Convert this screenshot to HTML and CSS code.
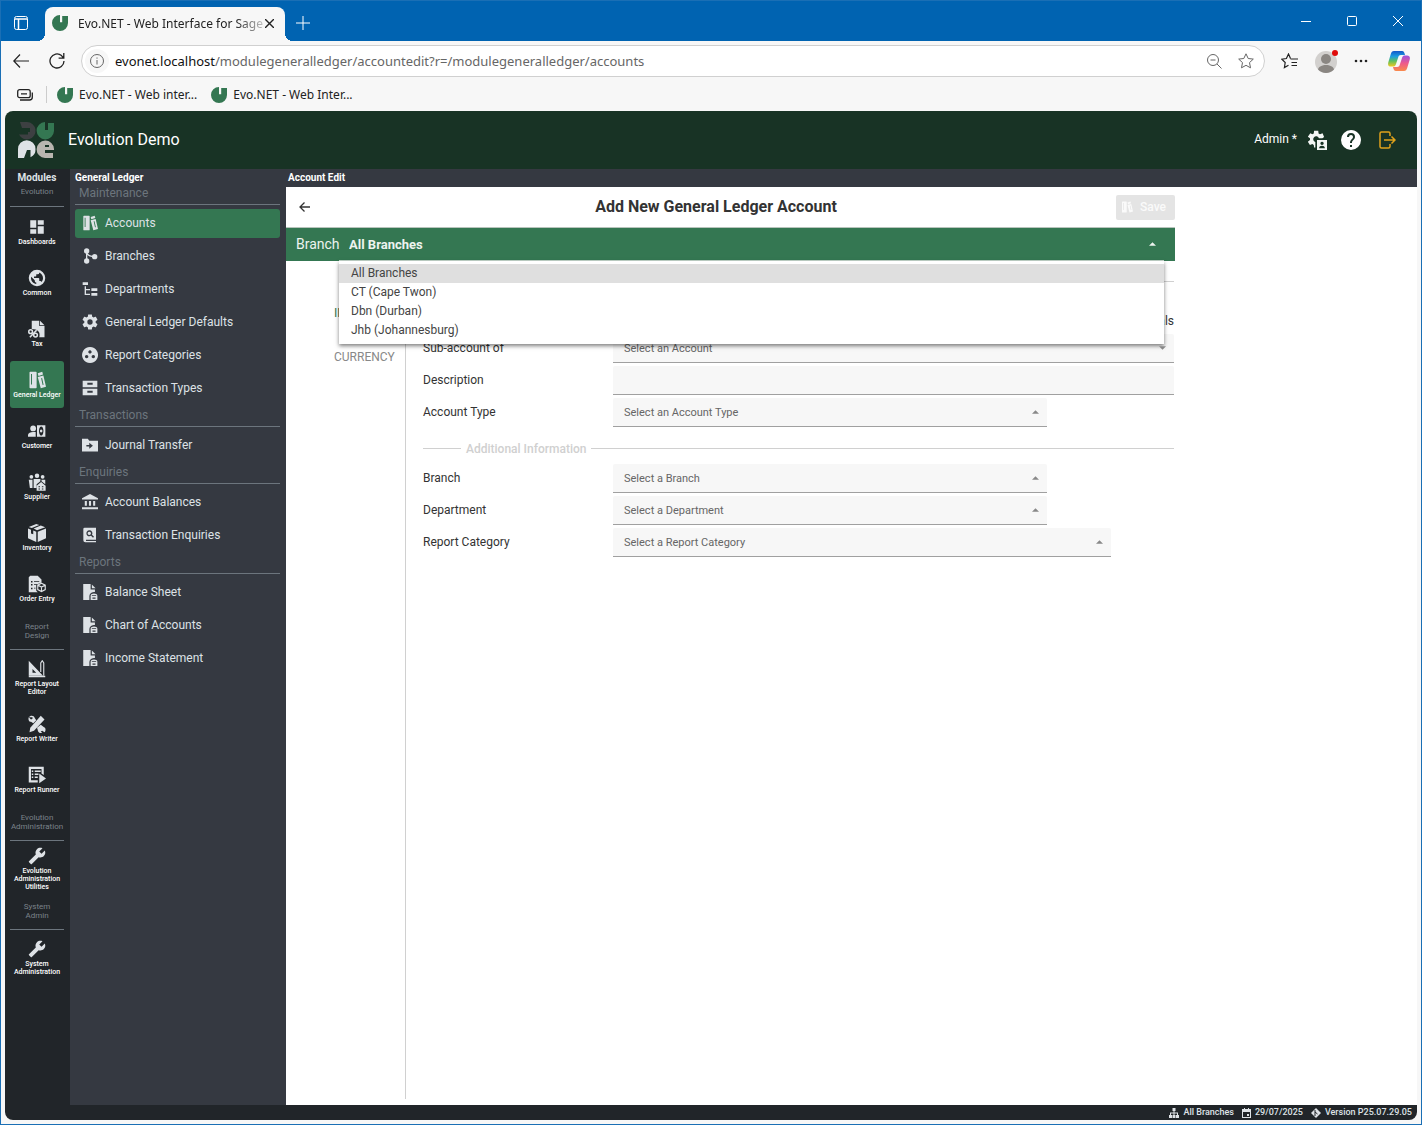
FILE: index.html
```html
<!DOCTYPE html>
<html lang="en">
<head>
<meta charset="utf-8">
<title>Evo.NET - Web Interface for Sage</title>
<link rel="stylesheet" href="styles.css">
</head>
<body>
<svg class="sprite" aria-hidden="true">
  <defs>
    <linearGradient id="cop-a" x1="0" y1="0" x2="0" y2="1"><stop offset="0" stop-color="#1257c9"/><stop offset=".35" stop-color="#1b9de0"/><stop offset=".65" stop-color="#5fc05f"/><stop offset="1" stop-color="#f2c81e"/></linearGradient>
    <linearGradient id="cop-b" x1="0" y1="0" x2="0" y2="1"><stop offset="0" stop-color="#9b52e0"/><stop offset=".5" stop-color="#ee5a8c"/><stop offset="1" stop-color="#f98a4b"/></linearGradient>
  </defs>
  <symbol id="i-evo" viewBox="0 0 16 16"><path fill="#347752" d="M8 0v7.200h2.200V1H16v7A8 8 0 1 1 8 0z"/></symbol>
  <symbol id="i-dash" viewBox="0 0 24 24"><path d="M13,3V9H21V3M13,21H21V11H13M3,21H11V15H3M3,13H11V3H3V13Z"/></symbol>
  <symbol id="i-globe" viewBox="0 0 24 24"><path d="M17.900,17.390C17.640,16.590 16.890,16 16,16H15V13A1,1 0 0,0 14,12H8V10H10A1,1 0 0,0 11,9V7H13A2,2 0 0,0 15,5V4.590C17.930,5.770 20,8.640 20,12C20,14.080 19.200,15.970 17.900,17.390M11,19.930C7.050,19.440 4,16.080 4,12C4,11.380 4.080,10.780 4.210,10.210L9,15V16A2,2 0 0,0 11,18M12,1A11,11 0 0,0 1,12A11,11 0 0,0 12,23A11,11 0 0,0 23,12A11,11 0 0,0 12,1Z"/></symbol>
  <symbol id="i-tax" viewBox="0 0 24 24"><path d="M5 1h10v7h7v15h-7c2-7-2-11-10-11zM16 1l6 6h-6z"/><g fill="none" stroke="currentColor" stroke-width="2"><circle cx="3.500" cy="15.500" r="2.500"/><circle cx="10" cy="20" r="2.500"/><path d="M11.500 13.500L2.500 23"/></g></symbol>
  <symbol id="i-books" viewBox="0 0 24 24"><path fill-rule="evenodd" d="M3 1h7.500a1 1 0 0 1 1 1v20a1 1 0 0 1-1 1H3a1 1 0 0 1-1-1V2a1 1 0 0 1 1-1zM4 4v14h1.300V4z"/><path fill-rule="evenodd" d="M13 3l6-2 1 3.500-6 2zM13 8l7.500-2L24 21l-7 2zM17.500 9.500l2 9 1.300-.3-2-9z"/></symbol>
  <symbol id="i-customer" viewBox="0 0 28 24"><circle cx="8" cy="8" r="4.500"/><path d="M0 21v-3c0-3 4-4.500 8-4.500h4V21z"/><path fill-rule="evenodd" d="M14 3h13v18H14zM20.500 5a3.500 7 0 1 0 .1 0zM20.500 9.500a2 2.500 0 1 1-.1 0z"/></symbol>
  <symbol id="i-supplier" viewBox="0 0 24 24"><circle cx="4.500" cy="5" r="2.500"/><circle cx="12" cy="3.500" r="3"/><circle cx="19.500" cy="5" r="2.500"/><path d="M1 9h5v11H2.500zM7.500 8h9v3l-5 4v5h-4zM18 9h5v6l-5-4z"/><path fill-rule="evenodd" d="M17.500 12l6 5v6.500h-12V17zM14 17.500V19h2v-1.500zM18.500 17.500V19h2v-1.500zM14 20.500V22h2v-1.500zM18.500 20.500V22h2v-1.500z"/></symbol>
  <symbol id="i-box" viewBox="0 0 24 24"><path d="M11 0l4 1.200-10 4L1 4zM17 2l6 2.200-11 4L7.500 6zM0 6l4 1.500v5l3 1V8.700l4 1.500V24L0 19zM13 10.200L24 6v13l-11 5z"/></symbol>
  <symbol id="i-order" viewBox="0 0 24 24"><path fill-rule="evenodd" d="M3 1h10l5 5v4l-7 3v8l2 2H1V3zM4 8v2h2V8zM8 8v1h7V8zM4 12v2h2v-2zM8 12v1h4v-1zM4 17v2h2v-2zM8 17v1h2v-1z"/><path fill="none" stroke="currentColor" stroke-width="1.500" d="M18 11l5 2.500v6L18 22l-5-2.500v-6zM13 13.500l5 2.500 5-2.500M18 16v6"/></symbol>
  <symbol id="i-ruler" viewBox="0 0 24 24"><path fill-rule="evenodd" d="M1 1l19 20H1zM6 12v5h5z"/><path fill="none" stroke="currentColor" stroke-width="1.500" d="M17 16V4l2-3 2 3v17"/><path d="M1 23h22v-2H1z"/></symbol>
  <symbol id="i-design" viewBox="0 0 24 24"><path d="M17 1l5 5L8 21l-6 2 1-6z"/><path d="M1 3c2-3 7-3 8 1l2 3-4 4-3-2C1 9 0 6 1 3l3 3 2-1 0-2zM17 13l4 3c3 1 3 5 1 7l-3-2-2 1 2 2c-3 1-6-1-6-4l-1-3z"/></symbol>
  <symbol id="i-runner" viewBox="0 0 24 24"><path fill-rule="evenodd" d="M1 1h20v11l-3-2V4H4v15h9v3H1z"/><path d="M5 6h2v2H5zM9 6h8v2H9zM5 10h2v2H5zM9 10h5v2H9zM5 14h2v2H5zM9 14h4v2H9z"/><path d="M15 10l9 6.500L15 23z"/></symbol>
  <symbol id="i-wrench" viewBox="0 0 24 24"><path transform="matrix(-1 0 0 1 24 0)" d="M22.700,19L13.600,9.900C14.500,7.600 14,4.900 12.100,3C10.100,1 7.100,0.600 4.700,1.700L9,6L6,9L1.600,4.700C0.400,7.100 0.900,10.100 2.900,12.100C4.800,14 7.500,14.500 9.800,13.600L18.900,22.700C19.300,23.100 19.900,23.100 20.300,22.700L22.600,20.400C23.100,20 23.100,19.300 22.700,19Z"/></symbol>
  <symbol id="i-branch" viewBox="0 0 24 24"><circle cx="7" cy="4.500" r="4"/><circle cx="7" cy="19.500" r="4"/><circle cx="19" cy="13" r="4"/><path fill="none" stroke="currentColor" stroke-width="2" d="M7 5v15M7 7c2 5 6 6 12 6"/></symbol>
  <symbol id="i-tree" viewBox="0 0 24 24"><path d="M1 2h8v4H1zM14 11h9v4h-9zM14 18h9v4h-9zM4 8h2v4h6v2H6v5h6v2H4z"/></symbol>
  <symbol id="i-cog" viewBox="1.500 1.500 21 21"><path d="M12,15.500A3.500,3.500 0 0,1 8.500,12A3.500,3.500 0 0,1 12,8.500A3.500,3.500 0 0,1 15.500,12A3.500,3.500 0 0,1 12,15.500M19.430,12.970C19.470,12.650 19.500,12.330 19.500,12C19.500,11.670 19.470,11.340 19.430,11L21.540,9.370C21.730,9.220 21.780,8.950 21.660,8.730L19.660,5.270C19.540,5.050 19.270,4.960 19.050,5.050L16.560,6.050C16.040,5.660 15.500,5.320 14.870,5.070L14.500,2.420C14.460,2.180 14.250,2 14,2H10C9.750,2 9.540,2.180 9.500,2.420L9.130,5.070C8.500,5.320 7.960,5.660 7.440,6.050L4.950,5.050C4.730,4.960 4.460,5.050 4.340,5.270L2.340,8.730C2.210,8.950 2.270,9.220 2.460,9.370L4.570,11C4.530,11.340 4.500,11.670 4.500,12C4.500,12.330 4.530,12.650 4.570,12.970L2.460,14.630C2.270,14.780 2.210,15.050 2.340,15.270L4.340,18.730C4.460,18.950 4.730,19.030 4.950,18.950L7.440,17.940C7.960,18.340 8.500,18.680 9.130,18.930L9.500,21.580C9.540,21.820 9.750,22 10,22H14C14.250,22 14.460,21.820 14.500,21.580L14.870,18.930C15.500,18.670 16.040,18.340 16.560,17.940L19.050,18.950C19.270,19.030 19.540,18.950 19.660,18.730L21.660,15.270C21.780,15.050 21.730,14.780 21.540,14.630L19.430,12.970Z"/></symbol>
  <symbol id="i-dots" viewBox="0 0 24 24"><path fill-rule="evenodd" d="M12 0a12 12 0 1 0 .1 0zM12 5a2.500 2.500 0 1 1-.1 0zM7 12a2.500 2.500 0 1 1-.1 0zM17 12a2.500 2.500 0 1 1-.1 0z"/></symbol>
  <symbol id="i-drawers" viewBox="0 0 24 24"><path fill-rule="evenodd" d="M1 1h22v10H1zM8 4v3h8V4zM1 13h22v10H1zM8 16v3h8v-3z"/></symbol>
  <symbol id="i-folder" viewBox="1 2 22 20"><path d="M11,17V14H7V12H11V9L16,13M22,6H11L9,3.500H1V21H23V6Z"/></symbol>
  <symbol id="i-bank" viewBox="0 0 23 23"><path d="M11.500,0L0,6V8H23V6M16,10V17H19V10M0,22H23V19H0M10,10V17H13V10M4,10V17H7V10H4Z"/></symbol>
  <symbol id="i-enquiry" viewBox="0 0 24 24"><path fill-rule="evenodd" d="M4 1h17v18H6v2h15v2H5a3 3 0 0 1-3-3V3a2 2 0 0 1 2-2zM11 5a4.500 4.500 0 1 0 2.500 8.300l3 3 1.500-1.500-3-3A4.500 4.500 0 0 0 11 5zM11 7a2.500 2.500 0 1 1-.1 0z"/></symbol>
  <symbol id="i-report" viewBox="0 0 24 26"><path fill-rule="evenodd" d="M1 0h12v9h7v4c-6-1-9 3-9 7v6H1z"/><path d="M15 1l6 6h-6z"/><path fill-rule="evenodd" d="M13 19c0-5 11-5 11 0v7H13zM15 19h7v-1h-7zM16 22v2h5v-2z"/></symbol>
  <symbol id="i-caret" viewBox="0 0 8 4"><path d="M0 4l4-4 4 4z"/></symbol>
</svg>

<div class="window">
  <header class="titlebar">
    <button class="icon-btn tab-actions" aria-label="Tab actions"><svg width="14" height="14" viewBox="0 0 14 14" fill="none" stroke="#fff"><rect x=".5" y=".5" width="13" height="13" rx="2"/><path d="M1 3h12M4.500 3v10" stroke-width="1.500"/></svg></button>
    <div class="tab">
      <svg class="fav"><use href="#i-evo"/></svg>
      <span class="tab-title">Evo.NET - Web Interface for Sage</span>
      <button class="icon-btn" aria-label="Close tab"><svg width="9" height="9" viewBox="0 0 9 9" stroke="#222" stroke-width="1.400"><path d="M0 0l9 9M9 0L0 9"/></svg></button>
    </div>
    <button class="icon-btn new-tab" aria-label="New tab"><svg width="14" height="14" viewBox="0 0 14 14" stroke="#fff"><path d="M7 0v14M0 7h14"/></svg></button>
    <div class="window-controls">
      <button class="icon-btn" aria-label="Minimise"><svg width="10" height="10" viewBox="0 0 10 10" stroke="#fff"><path d="M0 5.500h10"/></svg></button>
      <button class="icon-btn" aria-label="Maximise"><svg width="10" height="10" viewBox="0 0 10 10" fill="none" stroke="#fff"><rect x=".5" y=".5" width="9" height="9" rx="1"/></svg></button>
      <button class="icon-btn" aria-label="Close"><svg width="10" height="10" viewBox="0 0 10 10" stroke="#fff"><path d="M0 0l10 10M10 0L0 10"/></svg></button>
    </div>
  </header>

  <div class="toolbar">
    <button class="icon-btn nav-back" aria-label="Back"><svg width="16" height="14" viewBox="0 0 16 14" fill="none" stroke="#222" stroke-width="1.200"><path d="M16 7H1M7 .5L.8 7 7 13.500"/></svg></button>
    <button class="icon-btn" aria-label="Refresh"><svg width="16" height="16" viewBox="0 0 16 16" fill="none" stroke="#222" stroke-width="1.300"><path d="M15 8a7 7 0 1 1-2.500-5.400L14.500 5M14.800 0v5.200H9.600"/></svg></button>
    <div class="address">
      <span class="site-info"><svg width="14" height="14" viewBox="0 0 14 14" fill="none" stroke="#666"><circle cx="7" cy="7" r="6.500"/><path d="M7 6v4.500M7 3.500v1.200"/></svg></span>
      <span class="url"><b>evonet.localhost</b>/modulegeneralledger/accountedit?r=/modulegeneralledger/accounts</span>
      <button class="icon-btn" aria-label="Zoom out"><svg width="15" height="15" viewBox="0 0 15 15" fill="none" stroke="#666"><circle cx="6" cy="6" r="5.500"/><path d="M3.500 6h5M10 10l4.500 4.500"/></svg></button>
      <button class="icon-btn" aria-label="Add to favourites"><svg width="16" height="16" viewBox="0 0 16 16" fill="none" stroke="#666"><path d="M8 .8l2.200 4.700 5.100.6-3.800 3.500 1 5.200L8 12.300l-4.500 2.500 1-5.200L.7 6.100l5.100-.6z"/></svg></button>
    </div>
    <button class="icon-btn" aria-label="Favourites"><svg width="17" height="16" viewBox="0 0 17 16" fill="none" stroke="#222" stroke-width="1.200"><path d="M9.500 5.500L7.500 1 5.400 5.500.8 6.200 4.200 9.500l-.8 5 4.100-2.300M9.500 6H17M10.500 9.500H16M10.500 12.500H16"/></svg></button>
    <button class="icon-btn" aria-label="Profile"><svg width="24" height="24" viewBox="0 0 24 24"><circle cx="12" cy="13" r="11" fill="#d2d0ce"/><circle cx="12" cy="10" r="5" fill="#8a8682"/><path fill="#8a8682" d="M4 20.500c1-6 15-6 16 0a11 11 0 0 1-16 0z"/><circle cx="21" cy="4" r="3" fill="#e00b0b"/></svg></button>
    <button class="icon-btn more" aria-label="Settings and more"><svg width="14" height="4" viewBox="0 0 14 4"><circle cx="2" cy="2" r="1.300"/><circle cx="7" cy="2" r="1.300"/><circle cx="12" cy="2" r="1.300"/></svg></button>
    <button class="icon-btn" aria-label="Copilot"><svg width="22" height="20" viewBox="0 0 22 20"><path fill="url(#cop-a)" d="M6 0h8c2 0 2.500 2 3 4h-4c-2 0-2.500 1-3 3l-2 6c-.6 2-1.500 2.500-3 2.500H3c-2.500 0-3.500-1.500-2.600-4.500l2.400-8C3.400 1.200 4.200 0 6 0z"/><path fill="url(#cop-b)" d="M16 20H8c-2 0-2.500-2-3-4h4c2 0 2.500-1 3-3l2-6c.6-2 1.500-2.500 3-2.500h2c2.500 0 3.500 1.500 2.600 4.500l-2.400 8c-.6 1.800-1.400 3-3.200 3z"/></svg></button>
  </div>

  <nav class="bookmarks" aria-label="Favourites bar">
    <button class="icon-btn" aria-label="Workspaces"><svg width="16" height="12" viewBox="0 0 16 12" fill="none" stroke="#222" stroke-width="1.300"><rect x=".7" y=".7" width="12.500" height="8" rx="2"/><path d="M3 11h9.500c1.800 0 2.800-1 2.800-2.800V3.500M4 4.800h6"/></svg></button>
    <a href="#"><svg class="fav"><use href="#i-evo"/></svg>Evo.NET - Web inter...</a>
    <a href="#"><svg class="fav"><use href="#i-evo"/></svg>Evo.NET - Web Inter...</a>
  </nav>

  <div class="app">
    <header class="app-header">
      <svg class="logo" viewBox="0 0 36 36">
        <path fill="#3d4042" d="M2 0h7a8.700 8.700 0 1 1-8 12.500h9V10H12V6H4z"/>
        <path fill="#347752" d="M27 0v8h3V1h6v8A8.700 8.700 0 1 1 27 0z"/>
        <path fill="#dee2e6" d="M0 36V27a8.700 8.700 0 0 1 17.500 0 8.700 8.700 0 0 1-5 8.300V28H9l-3 8z"/>
        <path fill="#b9b6b0" d="M35 36h-8A8.700 8.700 0 1 1 36 27v1h-9v3h8zM27 23v2h4v-2z"/>
      </svg>
      <span class="company">Evolution Demo</span>
      <span class="user">Admin *</span>
      <button class="icon-btn" aria-label="User settings"><svg width="20" height="20" viewBox="0 0 24 24" fill="#f4f6f5"><path d="M19.430 11L21.540 9.370 19.660 5 16.560 6.050 14.870 5.070 14.500 2H9.500L9.130 5.070 7.440 6.050 4.950 5 2 9l2.570 2v2L2 15l2.500 4 2.940-1.060L9.130 18.930 9.500 22H11v-6.600A3.500 3.500 0 1 1 15.300 11z" transform="translate(-1 -1)"/><path fill-rule="evenodd" d="M12 12h12v12H12zM18 14a2 2 0 1 0 .1 0zM14.500 22h7c0-4-7-4-7 0z"/></svg></button>
      <button class="icon-btn" aria-label="Help"><svg width="20" height="20" viewBox="2 2 20 20" fill="#fff"><path d="M15.070,11.250L14.170,12.170C13.450,12.890 13,13.500 13,15H11V14.500C11,13.390 11.450,12.390 12.170,11.670L13.410,10.410C13.780,10.050 14,9.550 14,9C14,7.890 13.100,7 12,7A2,2 0 0,0 10,9H8A4,4 0 0,1 12,5A4,4 0 0,1 16,9C16,9.880 15.640,10.670 15.070,11.250M13,19H11V17H13M12,2A10,10 0 0,0 2,12A10,10 0 0,0 12,22A10,10 0 0,0 22,12C22,6.470 17.500,2 12,2Z"/></svg></button>
      <button class="icon-btn" aria-label="Sign out"><svg width="17" height="18" viewBox="0 0 17 18" fill="none" stroke="#e0a21b" stroke-width="1.500"><path d="M11 5V2.500C11 1.500 10.500 1 9.500 1h-7C1.500 1 1 1.500 1 2.500v13c0 1 .5 1.500 1.500 1.500h7c1 0 1.500-.5 1.500-1.500V13M5 9h10.500M12.500 5.500L16 9l-3.500 3.500"/></svg></button>
    </header>

    <div class="app-body">
      <nav class="modules" aria-label="Modules">
        <h2>Modules</h2>
        <h3 class="first">Evolution</h3>
        <a href="#"><svg><use href="#i-dash"/></svg>Dashboards</a>
        <a href="#"><svg><use href="#i-globe"/></svg>Common</a>
        <a href="#"><svg><use href="#i-tax"/></svg>Tax</a>
        <a href="#" class="active"><svg><use href="#i-books"/></svg>General Ledger</a>
        <a href="#"><svg><use href="#i-customer"/></svg>Customer</a>
        <a href="#"><svg><use href="#i-supplier"/></svg>Supplier</a>
        <a href="#"><svg><use href="#i-box"/></svg>Inventory</a>
        <a href="#"><svg><use href="#i-order"/></svg>Order Entry</a>
        <h3>Report<br>Design</h3>
        <a href="#"><svg><use href="#i-ruler"/></svg>Report Layout<br>Editor</a>
        <a href="#"><svg><use href="#i-design"/></svg>Report Writer</a>
        <a href="#"><svg><use href="#i-runner"/></svg>Report Runner</a>
        <h3>Evolution<br>Administration</h3>
        <a href="#"><svg><use href="#i-wrench"/></svg>Evolution<br>Administration<br>Utilities</a>
        <h3>System<br>Admin</h3>
        <a href="#"><svg><use href="#i-wrench"/></svg>System<br>Administration</a>
      </nav>

      <nav class="menu" aria-label="General Ledger">
        <h2>General Ledger</h2>
        <h3>Maintenance</h3>
        <a href="#" class="active"><svg><use href="#i-books"/></svg>Accounts</a>
        <a href="#"><svg><use href="#i-branch"/></svg>Branches</a>
        <a href="#"><svg><use href="#i-tree"/></svg>Departments</a>
        <a href="#"><svg><use href="#i-cog"/></svg>General Ledger Defaults</a>
        <a href="#"><svg><use href="#i-dots"/></svg>Report Categories</a>
        <a href="#"><svg><use href="#i-drawers"/></svg>Transaction Types</a>
        <h3>Transactions</h3>
        <a href="#"><svg><use href="#i-folder"/></svg>Journal Transfer</a>
        <h3>Enquiries</h3>
        <a href="#"><svg><use href="#i-bank"/></svg>Account Balances</a>
        <a href="#"><svg><use href="#i-enquiry"/></svg>Transaction Enquiries</a>
        <h3>Reports</h3>
        <a href="#"><svg><use href="#i-report"/></svg>Balance Sheet</a>
        <a href="#"><svg><use href="#i-report"/></svg>Chart of Accounts</a>
        <a href="#"><svg><use href="#i-report"/></svg>Income Statement</a>
      </nav>

      <main class="content">
        <h2 class="crumb">Account Edit</h2>
        <div class="panel">
          <div class="panel-head">
            <button class="icon-btn back" aria-label="Back"><svg width="11" height="10" viewBox="0 0 11 10" fill="none" stroke="#333" stroke-width="1.300"><path d="M11 5H1M5.500.5L1 5l4.500 4.500"/></svg></button>
            <h1>Add New General Ledger Account</h1>
            <button class="save" disabled><svg><use href="#i-books"/></svg>Save</button>
          </div>
          <div class="branch-bar">
            <label for="branch-filter">Branch</label>
            <div class="branch-select">
              <select id="branch-filter"><option>All Branches</option><option>CT (Cape Twon)</option><option>Dbn (Durban)</option><option>Jhb (Johannesburg)</option></select>
              <svg class="caret"><use href="#i-caret"/></svg>
              <ul class="options" role="listbox" aria-label="Branch">
                <li role="option" aria-selected="true">All Branches</li>
                <li role="option">CT (Cape Twon)</li>
                <li role="option">Dbn (Durban)</li>
                <li role="option">Jhb (Johannesburg)</li>
              </ul>
            </div>
          </div>
          <div class="panel-body">
            <nav class="tabs" aria-label="Sections">
              <a href="#" class="active">INFO</a>
              <a href="#">CURRENCY</a>
            </nav>
            <form class="form">
              <div class="divider first"><span>General</span></div>
              <div class="totals">Totals</div>
              <div class="row"><label for="sub">Sub-account of</label><div class="field"><select id="sub"><option>Select an Account</option></select><svg class="caret down"><use href="#i-caret"/></svg></div></div>
              <div class="row"><label for="desc">Description</label><div class="field"><input id="desc" type="text"></div></div>
              <div class="row"><label for="type">Account Type</label><div class="field short"><select id="type"><option>Select an Account Type</option></select><svg class="caret"><use href="#i-caret"/></svg></div></div>
              <div class="divider"><span>Additional Information</span></div>
              <div class="row"><label for="branch">Branch</label><div class="field short"><select id="branch"><option>Select a Branch</option></select><svg class="caret"><use href="#i-caret"/></svg></div></div>
              <div class="row"><label for="dept">Department</label><div class="field short"><select id="dept"><option>Select a Department</option></select><svg class="caret"><use href="#i-caret"/></svg></div></div>
              <div class="row"><label for="cat">Report Category</label><div class="field medium"><select id="cat"><option>Select a Report Category</option></select><svg class="caret"><use href="#i-caret"/></svg></div></div>
            </form>
          </div>
        </div>
      </main>
    </div>

    <footer class="status">
      <span><svg width="10" height="10" viewBox="0 0 10 10"><path d="M3.500 0h3v3h-1v1.500H9V7h1v3H7V7h1V5.500H5.500V7h1v3h-3V7h1V5.500H2V7h1v3H0V7h1V4.500h3.500V3h-1z"/></svg>All Branches</span>
      <span><svg width="9" height="10" viewBox="0 0 9 10"><path fill-rule="evenodd" d="M0 1h2V0h1v1h3V0h1v1h2v9H0zM1 4v5h7V4zM5 6h2v2H5z"/></svg>29/07/2025</span>
      <span><svg width="10" height="10" viewBox="0 0 10 10"><path d="M5 0l5 5-5 5-5-5z"/><path fill="none" stroke="#212529" d="M4 2v6M4 4l2.500 2"/></svg>Version P25.07.29.05</span>
    </footer>
  </div>
</div>
</body>
</html>
```

FILE: styles.css
```css
* { box-sizing: border-box; }

:root {
  --green: #347752;
  --dark: #212529;
  --slate: #353941;
  --chrome: #f7f7f7;
  --light: #dee2e6;
}

body {
  margin: 0;
  font-family: Roboto, "Liberation Sans", sans-serif;
  font-size: 12px;
  color: #333;
}

h1, h2, h3, ul { margin: 0; padding: 0; }
a { color: inherit; text-decoration: none; }
button, input, select { font: inherit; color: inherit; }
svg { flex: none; }
svg:not([fill]) { fill: currentColor; }
.sprite { position: absolute; width: 0; height: 0; }

.icon-btn {
  display: flex;
  align-items: center;
  justify-content: center;
  padding: 0;
  border: 0;
  background: none;
}

.window {
  display: flex;
  flex-direction: column;
  min-height: 100vh;
  border: 1px solid #1a6fb5;
  background: var(--chrome);
}

/* Browser chrome */
.titlebar, .toolbar, .bookmarks {
  display: flex;
  align-items: center;
  font-family: "Noto Sans", "Open Sans", sans-serif;
  font-size: 12px;
  color: #222;
}
.titlebar { height: 40px; background: #0063b1; }
.tab-actions { width: 40px; padding-top: 4px; }
.tab {
  position: relative;
  align-self: flex-end;
  display: flex;
  align-items: center;
  width: 240px;
  height: 34px;
  margin-left: 4px;
  padding: 0 11px 2px 7px;
  border-radius: 8px 8px 0 0;
  background: var(--chrome);
}
.tab::before, .tab::after {
  content: "";
  position: absolute;
  bottom: 0;
  width: 8px;
  height: 8px;
}
.tab::before { right: 100%; background: radial-gradient(circle at 0 0, transparent 8px, var(--chrome) 8px); }
.tab::after { left: 100%; background: radial-gradient(circle at 100% 0, transparent 8px, var(--chrome) 8px); }
.tab-title {
  flex: 1;
  margin: 0 0 0 10px;
  white-space: nowrap;
  -webkit-mask-image: linear-gradient(to right, #000 84%, rgba(0, 0, 0, .2));
  mask-image: linear-gradient(to right, #000 84%, rgba(0, 0, 0, .2));
}
.fav { width: 16px; height: 16px; }
.new-tab { width: 36px; padding-top: 4px; }
.window-controls { display: flex; margin-left: auto; }
.window-controls .icon-btn { width: 46px; height: 40px; }

.toolbar { height: 40px; padding: 0 11px 0 12px; gap: 16px; }
.nav-back, .more { margin-right: 4px; }
.address {
  flex: 1;
  display: flex;
  align-items: center;
  height: 32px;
  padding: 0 10px 0 3px;
  gap: 16px;
  border: 1px solid #d0d0d0;
  border-radius: 16px;
  background: #fff;
}
.site-info {
  display: flex;
  align-items: center;
  justify-content: center;
  width: 24px;
  height: 24px;
  border-radius: 12px;
  background: var(--chrome);
}
.url { flex: 1; margin-left: -10px; font-size: 13px; color: #666; }
.url b { font-weight: 400; color: #111; }

.bookmarks { height: 30px; padding: 0 16px 3px; gap: 16px; }
.bookmarks a { display: flex; align-items: center; gap: 6px; }
.bookmarks a:first-of-type { padding-left: 10px; margin: 0 -2px 0 -3px; border-left: 1px solid #ccc; }

/* Application frame */
.app {
  flex: 1;
  display: flex;
  flex-direction: column;
  margin: 0 4px 4px;
  border-radius: 8px;
  overflow: hidden;
  background: #fff;
}
.app-header {
  display: flex;
  align-items: center;
  height: 58px;
  padding: 0 21px 0 13px;
  gap: 14px;
  background: #183325;
  color: #fff;
}
.logo { width: 36px; height: 36px; }
.company { flex: 1; padding-bottom: 2px; font-size: 16px; }
.user { margin-right: -4px; padding-bottom: 2px; }
.app-header .icon-btn:last-child { margin-left: 4px; }

.app-body { flex: 1; display: flex; }
h2 { font-size: 10px; font-weight: 700; line-height: 18px; color: #fff; }

.modules {
  display: flex;
  flex-direction: column;
  gap: 4px;
  width: 65px;
  padding: 0 6px 0 5px;
  background: var(--dark);
  color: var(--light);
  text-align: center;
}
.modules h2 { margin-bottom: -4px; color: var(--light); }
.modules h3 {
  display: flex;
  flex-direction: column;
  align-items: center;
  padding: 6px 0 9px;
  border-bottom: 1px solid #6c757d;
  font-size: 8px;
  font-weight: 400;
  line-height: 9px;
  color: #7b838a;
  white-space: nowrap;
}
.modules h3.first { margin-bottom: -3px; padding: 0 0 10px; }
.modules a {
  display: flex;
  flex-direction: column;
  align-items: center;
  justify-content: center;
  min-height: 47px;
  border-radius: 3px;
  font-size: 7px;
  font-weight: 500;
  line-height: 8px;
  color: #fff;
  white-space: nowrap;
}
.modules svg { width: 18px; height: 18px; margin-bottom: 2px; color: var(--light); }
.modules .active, .menu .active { background: var(--green); }

.menu {
  display: flex;
  flex-direction: column;
  gap: 4px;
  width: 216px;
  padding: 0 6px 0 5px;
  background: var(--slate);
  color: var(--light);
}
.menu h2 { margin-bottom: -6px; }
.menu h3 {
  height: 20px;
  padding-left: 4px;
  font-size: 12px;
  font-weight: 400;
  line-height: 16px;
  color: #6c757d;
  border-bottom: 1px solid #6c757d;
}
.menu a {
  display: flex;
  align-items: center;
  height: 29px;
  padding: 0 0 2px 7px;
  gap: 7px;
  border-radius: 3px;
}
.menu svg { width: 16px; height: 16px; }

/* Editor panel */
.content { flex: 1; display: flex; flex-direction: column; min-width: 0; }
.crumb { padding-left: 2px; background: var(--slate); }
.panel { flex: 1; display: flex; flex-direction: column; max-width: 889px; }
.panel-head {
  display: flex;
  align-items: center;
  justify-content: space-between;
  height: 41px;
  border-bottom: 1px solid #b8c4bc;
}
.panel-head h1 { padding-bottom: 2px; font-size: 16px; font-weight: 700; }
.back { width: 36px; height: 36px; margin-right: -6px; }
.save {
  display: flex;
  align-items: center;
  width: 59px;
  height: 25px;
  padding: 0 5px;
  gap: 7px;
  border: 0;
  border-radius: 2px;
  background: #e4e4e4;
  color: #fafafa;
  font-weight: 500;
}
.save svg { width: 12px; height: 12px; }

.branch-bar {
  display: flex;
  height: 33px;
  padding: 0 11px 0 10px;
  background: var(--green);
  color: #edf3ef;
}
.branch-bar label { width: 43px; font-size: 14px; line-height: 33px; }
.branch-select, .field { display: grid; align-items: center; }
.branch-select { position: relative; flex: 1; border-bottom: 1px solid #c4d6cb; }
.branch-select select, .field select, .field input {
  grid-area: 1 / 1;
  width: 100%;
  height: 100%;
  padding: 0 11px;
  border: 0;
  outline: 0;
  background: none;
  appearance: none;
}
.branch-select select { padding: 0 10px; font-size: 13px; font-weight: 700; }
.caret {
  grid-area: 1 / 1;
  justify-self: end;
  width: 7px;
  height: 4px;
  margin-right: 8px;
  pointer-events: none;
}
.caret.down { transform: rotate(180deg); }
.options {
  position: absolute;
  top: 100%;
  left: 0;
  right: 0;
  margin-top: 1px;
  padding: 3px 0 4px;
  background: #fff;
  box-shadow: 0 2px 4px rgba(0, 0, 0, .5);
  color: #444;
  list-style: none;
}
.options li { padding-left: 12px; line-height: 19px; }
.options li[aria-selected="true"] { background: #dfdfdf; }

.panel-body { flex: 1; display: flex; padding-bottom: 6px; }
.tabs {
  display: flex;
  flex-direction: column;
  gap: 24px;
  width: 120px;
  padding: 42px 0 0 48px;
  border-right: 1px solid #d0d0d0;
  line-height: 20px;
  color: #888;
}
.tabs .active { color: var(--green); }

.form {
  flex: 1;
  display: flex;
  flex-direction: column;
  gap: 3px;
  padding: 0 1px 0 17px;
}
.row { display: grid; grid-template-columns: 190px 1fr; align-items: center; height: 29px; }
.row label { padding-bottom: 2px; }
.field {
  height: 29px;
  border-bottom: 1px solid #a0a0a0;
  border-radius: 2px 2px 0 0;
  background: #f7f7f7;
  font-size: 11px;
  color: #666;
}
.field .caret { color: #888; }
.short { max-width: 434px; }
.medium { max-width: 498px; }
.totals { height: 29px; line-height: 38px; text-align: right; }
.divider {
  display: flex;
  align-items: center;
  gap: 5px;
  height: 31px;
  padding-top: 6px;
  font-weight: 500;
  color: #d0d0d0;
}
.divider::before, .divider::after { content: ""; height: 1px; background: #d0d0d0; }
.divider::before { width: 38px; }
.divider::after { flex: 1; }
.divider.first { height: 38px; padding-top: 2px; }

.status {
  display: flex;
  justify-content: flex-end;
  gap: 8px;
  height: 15px;
  padding-right: 5px;
  background: var(--dark);
  color: var(--light);
  font-size: 9px;
  font-weight: 500;
  line-height: 15px;
}
.status span { display: flex; align-items: center; gap: 4px; }
```
